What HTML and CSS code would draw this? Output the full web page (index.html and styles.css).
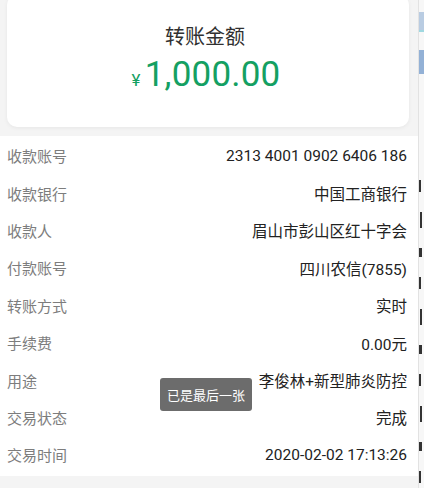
FILE: index.html
```html
<!DOCTYPE html>
<html lang="zh">
<head>
<meta charset="utf-8">
<link rel="stylesheet" href="styles.css">
</head>
<body>
<div class="page">
  <div class="main">
    <div class="card">
      <div class="title">转账金额</div>
      <div class="amount"><span class="yen">¥</span>1,000.00</div>
    </div>
    <div class="list">
      <div class="row"><span class="label">收款账号</span><span class="value">2313 4001 0902 6406 186</span></div>
      <div class="row"><span class="label">收款银行</span><span class="value">中国工商银行</span></div>
      <div class="row"><span class="label">收款人</span><span class="value">眉山市彭山区红十字会</span></div>
      <div class="row"><span class="label">付款账号</span><span class="value">四川农信(7855)</span></div>
      <div class="row"><span class="label">转账方式</span><span class="value">实时</span></div>
      <div class="row"><span class="label">手续费</span><span class="value">0.00元</span></div>
      <div class="row"><span class="label">用途</span><span class="value">李俊林+新型肺炎防控</span></div>
      <div class="row"><span class="label">交易状态</span><span class="value">完成</span></div>
      <div class="row"><span class="label">交易时间</span><span class="value">2020-02-02 17:13:26</span></div>
    </div>
    <div class="toast">已是最后一张</div>
  </div>
  <div class="edge">
    <div class="edge-bar b1"></div>
    <div class="edge-line"></div>
    <div class="edge-bar b2"></div>
    <div class="edge-marks">
      <i class="m s1"></i><i class="m s2"></i><i class="m s3"></i><i class="m s1"></i>
      <i class="m s2"></i><i class="m s3"></i><i class="m s1"></i><i class="m s2"></i>
      <i class="m s3"></i><i class="m s1"></i>
    </div>
  </div>
</div>
</body>
</html>
```

FILE: styles.css
```css
html, body {
  margin: 0;
  padding: 0;
}
body {
  background: #f3f3f3;
  font-family: Roboto, "Noto Sans CJK SC", sans-serif;
  width: 424px;
  height: 488px;
  overflow: hidden;
}
.page {
  display: flex;
  height: 488px;
}
.main {
  position: relative;
  width: 418px;
  flex: none;
  background: #f4f4f4;
  border-right: 1px solid #e2e2e2;
}
.card {
  margin: -5px 9px 0 7px;
  height: 132px;
  background: #fff;
  border-radius: 10px;
  box-shadow: 0 1px 4px rgba(0, 0, 0, 0.06);
  display: flex;
  flex-direction: column;
  align-items: center;
}
.title {
  margin-top: 29px;
  font-size: 20px;
  line-height: 26px;
  color: #303030;
  padding-right: 6px;
}
.amount {
  margin-top: 3px;
  font-size: 35px;
  line-height: 44px;
  color: #14a062;
  font-weight: 400;
  letter-spacing: 0.2px;
  padding-right: 4px;
}
.yen {
  font-size: 17px;
  margin-right: 4px;
}
.list {
  margin-top: 9px;
  background: #fff;
  padding: 1px 0 2px;
}
.row {
  display: flex;
  justify-content: space-between;
  align-items: center;
  height: 37.4px;
  padding: 0 11px 0 7px;
}
.label {
  color: #7d7d7d;
  font-size: 15px;
}
.value {
  color: #222;
  font-size: 15.5px;
}
.toast {
  position: absolute;
  left: 160px;
  top: 378px;
  width: 92px;
  height: 33px;
  background: #6c6c6c;
  border-radius: 3px;
  color: #fff;
  font-size: 13px;
  display: flex;
  align-items: center;
  justify-content: center;
}
.edge {
  flex: 1;
  background: #f7f7f7;
  overflow: hidden;
  display: flex;
  flex-direction: column;
}
.edge-bar.b1 {
  margin-top: 12px;
  height: 18px;
  background: #b9cce2;
}
.edge-line {
  height: 2px;
  background: #9fd8e0;
}
.edge-bar.b2 {
  margin-top: 18px;
  height: 24px;
  background: #93b1d6;
}
.edge-marks {
  margin-top: 106px;
  display: flex;
  flex-direction: column;
  gap: 20px;
}
.m {
  display: block;
  background: #333;
  width: 2px;
}
.s1 { height: 12px; }
.s2 { height: 16px; margin-left: 1px; }
.s3 { height: 9px; width: 3px; }
```
